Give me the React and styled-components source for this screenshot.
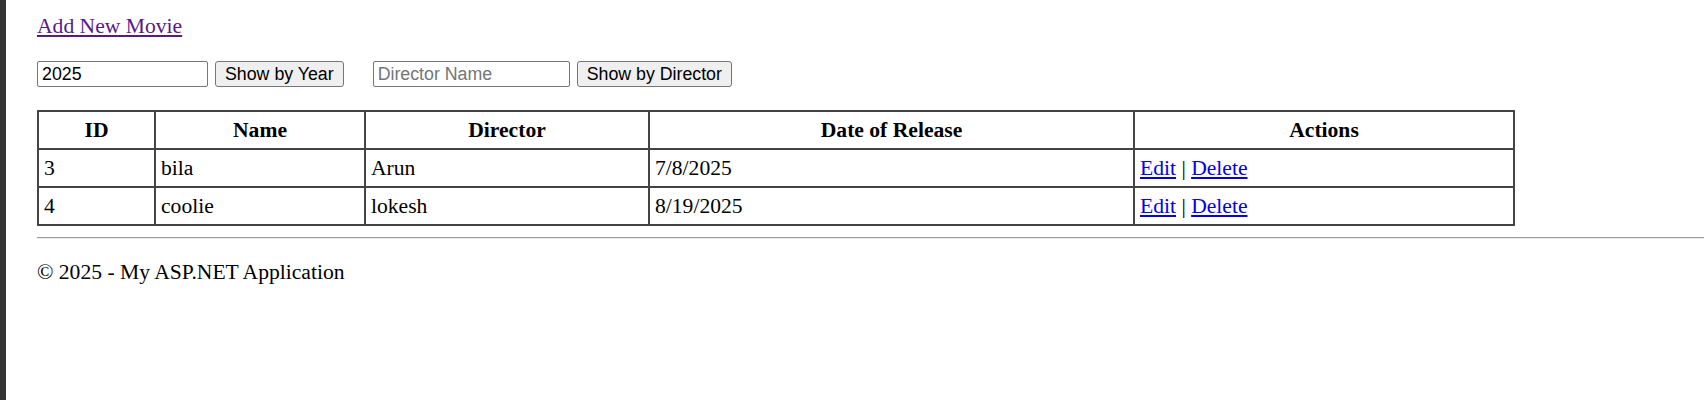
import styled, { createGlobalStyle } from 'styled-components';

const GlobalStyle = createGlobalStyle`
  html, body {
    margin: 0;
    padding: 0;
    background: #ffffff;
  }
  body {
    font-family: "Liberation Serif", "Times New Roman", serif;
    font-size: 21.6px;
    color: #000000;
  }
`

// sample data from the list page
const movies = [
  { id: 3, name: "bila", director: "Arun", release: "7/8/2025" },
  { id: 4, name: "coolie", director: "lokesh", release: "8/19/2025" },
];

const columns = [
  { label: "ID", width: 117 },
  { label: "Name", width: 210 },
  { label: "Director", width: 284 },
  { label: "Date of Release", width: 485 },
  { label: "Actions", width: 380 },
];

const App = () => {
  return (
    <>
      <GlobalStyle />
      <Page>
        <Strip />
        <Main>
          <TopLink>
            <VisitedLink href="#create">Add New Movie</VisitedLink>
          </TopLink>

          <SearchRow>
            <SearchGroup>
              <StInput type="text" defaultValue="2025" width={171} />
              <StBtn type="button">Show by Year</StBtn>
            </SearchGroup>
            <SearchGroup>
              <StInput type="text" placeholder="Director Name" width={197} />
              <StBtn type="button">Show by Director</StBtn>
            </SearchGroup>
          </SearchRow>

          <StTable>
            <colgroup>
              {columns.map((c) => (
                <col key={c.label} style={{ width: c.width }} />
              ))}
            </colgroup>
            <thead>
              <tr>
                {columns.map((c) => (
                  <StTh key={c.label}>{c.label}</StTh>
                ))}
              </tr>
            </thead>
            <tbody>
              {movies.map((m) => (
                <tr key={m.id}>
                  <StTd>{m.id}</StTd>
                  <StTd>{m.name}</StTd>
                  <StTd>{m.director}</StTd>
                  <StTd>{m.release}</StTd>
                  <StTd>
                    <ActionLink href="#edit">Edit</ActionLink> | <ActionLink href="#delete">Delete</ActionLink>
                  </StTd>
                </tr>
              ))}
            </tbody>
          </StTable>

          <StHr />
          <Footer>© 2025 - My ASP.NET Application</Footer>
        </Main>
      </Page>
    </>
  )
}

export default App;

const Page = styled.div`
  display: flex;
  min-height: 100vh;
  overflow: hidden;
`

const Strip = styled.div`
  width: 6px;
  flex-shrink: 0;
  background-color: #353535;
`

const Main = styled.div`
  flex: 1;
  padding: 14px 0 0 31px;
  line-height: 24px;
`

const TopLink = styled.div`
  line-height: 24px;
`

const VisitedLink = styled.a`
  color: #551a8b;
  text-decoration: underline;
`

const SearchRow = styled.div`
  display: flex;
  align-items: flex-start;
  gap: 29px;
  margin-top: 23px;
`

const SearchGroup = styled.div`
  display: flex;
  align-items: flex-start;
  gap: 7px;
`

const StInput = styled.input`
  width: ${(p) => p.width}px;
  height: 26px;
  box-sizing: border-box;
  margin: 0;
  padding: 1px 4px;
  border: 1px solid #767676;
  border-radius: 2px;
  font-family: "Liberation Sans", Arial, sans-serif;
  font-size: 17.78px;
  color: #000000;
  background: #ffffff;
  outline: none;

  &::placeholder {
    color: #757575;
  }
`

const StBtn = styled.button`
  height: 26px;
  box-sizing: border-box;
  margin: 0;
  padding: 0 9px;
  border: 1px solid #767676;
  border-radius: 3px;
  background-color: #efefef;
  font-family: "Liberation Sans", Arial, sans-serif;
  font-size: 17.78px;
  line-height: 22px;
  color: #000000;
  cursor: pointer;
`

const StTable = styled.table`
  width: 1476px;
  margin-top: 23px;
  table-layout: fixed;
  border-collapse: collapse;
  border: 2px solid #444444;
`

const StTh = styled.th`
  border: 2px solid #444444;
  padding: 5px 5px;
  height: 26px;
  line-height: 26px;
  font-weight: bold;
  text-align: center;
`

const StTd = styled.td`
  border: 2px solid #444444;
  padding: 5px 5px;
  height: 26px;
  line-height: 26px;
  text-align: left;
`

const ActionLink = styled.a`
  color: #0000ee;
  text-decoration: underline;
`

const StHr = styled.hr`
  margin: 11px 0 0 0;
  height: 0;
  border: 0;
  border-top: 1px solid #9a9a9a;
  border-bottom: 1px solid #eeeeee;
`

const Footer = styled.p`
  margin: 21px 0 0 0;
  line-height: 24px;
`
